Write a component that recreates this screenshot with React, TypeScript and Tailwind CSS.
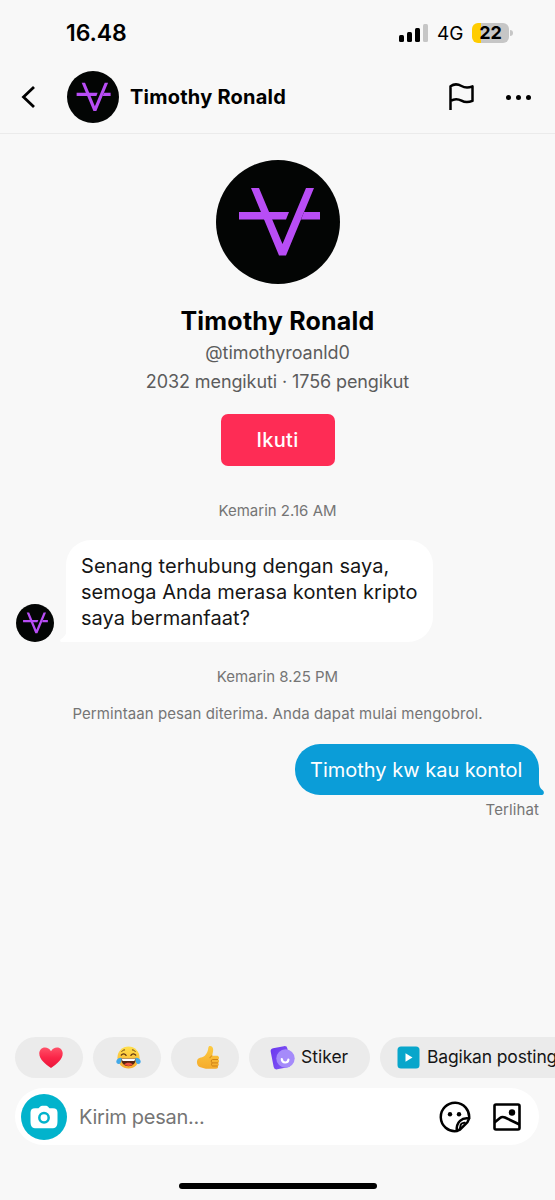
import React from 'react';
import clsx from 'clsx';

interface LogoProps {
  className?: string;
}

function Logo({ className }: LogoProps) {
  return (
    <svg viewBox="0 0 124 124" className={clsx('block shrink-0', className)}>
      <circle cx="62" cy="62" r="62" fill="#030504" />
      <g fill="#b84df5">
        <path d="M35 28h8l23.500 56L90 28h8L70 95.500h-7z" />
        <path d="M23 52h50l-3 7.500H23z" />
        <path d="M88 52h16v7.500H85z" />
      </g>
    </svg>
  );
}

function StatusBar() {
  return (
    <div className="h-[62px] shrink-0 flex justify-between pl-[66px] pr-[42px] pt-[18px]">
      <span className="text-[23px] leading-[31px] font-semibold tracking-[-0.1px]">16.48</span>
      <div className="flex items-center h-[30px]">
        <div className="flex items-end gap-[3px] h-[18px]">
          <i className="w-[5px] h-[7px] rounded-[1.5px] bg-black" />
          <i className="w-[5px] h-[10px] rounded-[1.5px] bg-black" />
          <i className="w-[5px] h-[14px] rounded-[1.5px] bg-black" />
          <i className="w-[5px] h-[18px] rounded-[1.5px] bg-[#c6c6c6]" />
        </div>
        <span className="ml-[9px] w-[26px] text-[19px] leading-[30px] pt-[1px] whitespace-nowrap">4G</span>
        <div className="ml-[9px] w-[37px] h-[20px] rounded-[6px] bg-[linear-gradient(to_right,#ffcc00_9px,#c6c6c6_9px)] text-[18px] leading-[20px] font-bold text-center">
          22
        </div>
        <i className="ml-[1px] w-[3px] h-[6px] rounded-r-full bg-[#c6c6c6]" />
      </div>
    </div>
  );
}

function Header() {
  return (
    <header className="h-[72px] shrink-0 flex items-center border-b border-[#ebebeb] pl-[20px] pr-[23px] pb-[1px]">
      <svg width="17" height="24" viewBox="0 0 17 24" fill="none" stroke="#000" strokeWidth="2.800" className="block">
        <path d="M14 2L3.500 12L14 22" />
      </svg>
      <Logo className="ml-[30px] size-[52px]" />
      <h1 className="ml-[11px] text-[20px] font-bold tracking-[0.23px] whitespace-nowrap">Timothy Ronald</h1>
      <svg
        width="28"
        height="28"
        viewBox="0 0 28 28"
        fill="none"
        stroke="#000"
        strokeWidth="2.500"
        strokeLinejoin="round"
        className="ml-auto block"
      >
        <path d="M3.500 27V3.200C7 .8 11 1 14.500 3c3.200 1.900 6.800 2 11 .4v14.500c-4.200 1.700-7.800 1.600-11-.2C11 15.700 7 15.700 3.500 18" />
      </svg>
      <div className="ml-[31px] mr-[1px] flex gap-[5px]">
        <i className="size-[5px] rounded-full bg-black" />
        <i className="size-[5px] rounded-full bg-black" />
        <i className="size-[5px] rounded-full bg-black" />
      </div>
    </header>
  );
}

function Profile() {
  return (
    <section className="flex flex-col items-center pt-[26px]">
      <Logo className="size-[124px]" />
      <h2 className="mt-[21px] text-[25px] leading-[32px] font-bold tracking-[0.23px]">Timothy Ronald</h2>
      <p className="mt-[2px] text-[18px] leading-[28px] tracking-[-0.07px] text-[#5c5c5c]">@timothyroanld0</p>
      <p className="mt-[1px] text-[18px] leading-[28px] tracking-[-0.1px] text-[#5c5c5c]">
        2032 mengikuti · 1756 pengikut
      </p>
      <button className="mt-[18px] w-[114px] h-[52px] rounded-[7px] bg-[#fe2c55] text-white text-[20px] font-medium tracking-[0.3px]">
        Ikuti
      </button>
    </section>
  );
}

function Messages() {
  return (
    <section className="flex flex-col">
      <p className="mt-[35px] text-center text-[15px] leading-[20px] text-[#757575]">Kemarin 2.16 AM</p>
      <div className="mt-[19px] pl-4 flex items-end">
        <Logo className="size-[38px]" />
        <div className="relative ml-[12px] w-[367px] h-[102px] rounded-[25px] rounded-bl-none bg-white pl-[15px] pt-[13px] text-[20px] leading-[26px] tracking-[0.05px] whitespace-nowrap text-[#161616]">
          <svg width="7" height="12" viewBox="0 0 7 12" className="absolute bottom-0 -left-[6px]">
            <path d="M7 0C6 5 4 7 1 9c-1.500 1-1 3 .5 3H7z" fill="#fff" />
          </svg>
          <p>Senang terhubung dengan saya,</p>
          <p>semoga Anda merasa konten kripto</p>
          <p>saya bermanfaat?</p>
        </div>
      </div>
      <p className="mt-[25px] text-center text-[15px] leading-[20px] text-[#757575]">Kemarin 8.25 PM</p>
      <p className="mt-[17px] text-center text-[15px] leading-[20px] tracking-[0.08px] text-[#757575]">
        Permintaan pesan diterima. Anda dapat mulai mengobrol.
      </p>
      <div className="mt-[20px] mr-[16px] self-end relative w-[244px] h-[51px] rounded-[25px] rounded-br-none bg-[#0b9dd8] pl-[15px] text-[20px] leading-[53px] whitespace-nowrap text-white">
        <svg width="7" height="14" viewBox="0 0 7 14" className="absolute bottom-0 -right-[5px]">
          <path d="M0 0h2c0 5 1 7 4 9.500 1.500 1.500 1 4.500-1 4.500H0z" fill="#0b9dd8" />
        </svg>
        Timothy kw kau kontol
      </div>
      <p className="mt-[5px] mr-[16px] text-right text-[15px] leading-[20px] tracking-[0.1px] text-[#757575]">Terlihat</p>
    </section>
  );
}

function Heart() {
  return (
    <svg width="26" height="24" viewBox="0 0 26 24">
      <defs>
        <linearGradient id="heart" x1="0" y1="0" x2="0" y2="1">
          <stop offset="0" stopColor="#ff5168" />
          <stop offset=".5" stopColor="#fb2548" />
          <stop offset="1" stopColor="#e9163a" />
        </linearGradient>
      </defs>
      <path
        d="M13 5.200C11.500 2.800 9.500 1.500 7 1.500 3.500 1.500 1.300 4.200 1.300 7.600c0 6 6.200 10.600 11.700 14.400 5.500-3.800 11.700-8.400 11.700-14.400 0-3.400-2.200-6.100-5.700-6.100-2.500 0-4.500 1.300-6 3.700z"
        fill="url(#heart)"
      />
    </svg>
  );
}

function Joy() {
  return (
    <svg width="25" height="25" viewBox="0 0 26 26">
      <defs>
        <linearGradient id="face" x1="0" y1="0" x2="0" y2="1">
          <stop offset="0" stopColor="#ffe04b" />
          <stop offset="1" stopColor="#f8ab2f" />
        </linearGradient>
      </defs>
      <circle cx="13" cy="13" r="11.500" fill="url(#face)" />
      <g fill="none" stroke="#5f3512" strokeWidth="1.300" strokeLinecap="round" strokeLinejoin="round">
        <path d="M6 6.700C7 5.500 8 5 9 5.100M17 5.100c1-.1 2 .4 3 1.600" strokeWidth="1" />
        <path d="M5.500 10.600c1.300-2 3.600-2 5 .2M20.500 10.600c-1.300-2-3.600-2-5 .2" />
      </g>
      <path d="M5.500 14h15c.3 4.800-3 8-7.500 8s-7.800-3.200-7.500-8z" fill="#572512" />
      <path d="M6.200 14.300h13.600c0 1.500-.6 2.400-1.600 2.400H7.800c-1 0-1.600-.9-1.600-2.400z" fill="#fff" />
      <path d="M8.500 20.300c2-2.300 7-2.300 9 0-2.500 2-6.500 2-9 0z" fill="#f0503c" />
      <path d="M5.800 13.200C3 13 .5 14.500.3 17c-.1 2 1.300 3 2.700 2.800 2.300-.3 2.900-3.600 2.800-6.600zM20.200 13.200c2.800-.2 5.300 1.300 5.500 3.800.1 2-1.300 3-2.700 2.800-2.300-.3-2.900-3.600-2.800-6.600z" fill="#42a9e9" />
    </svg>
  );
}

function ThumbsUp() {
  return (
    <svg width="24" height="26" viewBox="0 0 24 26">
      <defs>
        <linearGradient id="thumb" x1="0" y1="0" x2="0" y2="1">
          <stop offset="0" stopColor="#fdcb41" />
          <stop offset="1" stopColor="#f5ab2c" />
        </linearGradient>
      </defs>
      <path
        d="M1.500 14.500C3 12 7 13 9 10.500c2-2.500 3-4.500 3.300-7.500.1-1.600 1-2.200 2-2 2.400.4 3.200 2.500 2.800 5l-.9 4.800h4.600c2.400 0 2.900 2.800 1.400 3.700 1.300.8 1.200 2.700 0 3.400 1 .9.800 2.500-.4 3.100.7 1.300-.1 2.800-2 2.800H13c-3.500.2-6-.6-8.500-1.500C.8 21 .4 17 1.500 14.500z"
        fill="url(#thumb)"
      />
      <path
        d="M22 14.500h-5.500c-1.700 0-1.700 3.300 0 3.400H22M16.500 17.900c-1.500.2-1.300 2.900.2 3.100h5M16.200 10.800c-1.500.5-2.300 1.400-2.200 2.400"
        fill="none"
        stroke="#c97a13"
        strokeWidth=".9"
      />
    </svg>
  );
}

function StickerBadge() {
  return (
    <svg width="26" height="26" viewBox="0 0 26 26" className="block shrink-0">
      <defs>
        <linearGradient id="card" x1="0" y1="0" x2="1" y2="1">
          <stop offset="0" stopColor="#6b37ef" />
          <stop offset="1" stopColor="#855cf6" />
        </linearGradient>
      </defs>
      <rect x="3" y="2" width="17" height="21.500" rx="3" transform="rotate(-11 11.500 12.500)" fill="url(#card)" />
      <circle cx="16.500" cy="13.500" r="9.200" fill="#a58bfa" />
      <path
        d="M12.800 14c.3 4.600 6.100 4.500 6.600.6"
        fill="none"
        stroke="#fff"
        strokeWidth="2.200"
        strokeLinecap="round"
      />
    </svg>
  );
}

const chip = 'h-[41px] shrink-0 rounded-full bg-[#ebebeb] flex items-center';

function QuickReplies() {
  return (
    <div className="flex gap-[10px] pl-[15px] overflow-hidden text-[17.5px] text-[#161616] whitespace-nowrap">
      <div className={clsx(chip, 'w-[68px] justify-center pl-[3px]')}>
        <Heart />
      </div>
      <div className={clsx(chip, 'w-[68px] justify-center pl-[3px]')}>
        <Joy />
      </div>
      <div className={clsx(chip, 'w-[68px] justify-center pl-[5px]')}>
        <ThumbsUp />
      </div>
      <div className={clsx(chip, 'w-[121px] pl-[20px]')}>
        <StickerBadge />
        <span className="ml-[6px]">Stiker</span>
      </div>
      <div className={clsx(chip, 'w-[230px] pl-[17px]')}>
        <svg width="23" height="23" viewBox="0 0 23 23" className="block shrink-0">
          <rect x=".5" y=".5" width="22" height="22" rx="3.500" fill="#08a6cb" />
          <path d="M8.500 7.200v8.600l7-4.300z" fill="#fff" />
        </svg>
        <span className="ml-[7px] tracking-[-0.15px]">Bagikan posting</span>
      </div>
    </div>
  );
}

function Composer() {
  return (
    <div className="mt-[10px] ml-[15px] mr-[16px] h-[57px] shrink-0 rounded-full bg-white flex items-center pl-[6px] pr-[17px]">
      <div className="size-[46px] rounded-full bg-[#02b3cc] flex items-center justify-center">
        <svg width="28" height="24" viewBox="0 0 28 24">
          <path
            d="M8.500 3.200 10 1.700C10.700 1 11.300.7 12.300.7h3.400c1 0 1.600.3 2.300 1l1.500 1.500H23c3 0 4.500 1.500 4.500 4.400v8.200c0 6-1.500 7.500-6 7.500h-15c-4.500 0-6-1.500-6-7.500V7.600c0-2.900 1.500-4.400 4.500-4.400z"
            fill="#fff"
          />
          <circle cx="14" cy="12.800" r="4.700" fill="none" stroke="#02b3cc" strokeWidth="2.500" />
        </svg>
      </div>
      <span className="ml-[12px] text-[20px] tracking-[-0.27px] text-[#757575]">Kirim pesan...</span>
      <svg
        width="32"
        height="32"
        viewBox="0 0 32 32"
        fill="none"
        stroke="#000"
        strokeWidth="2.500"
        strokeLinejoin="round"
        className="ml-auto block"
      >
        <path d="M30.100 17.500A14.200 14.200 0 1 0 17.500 30.100" />
        <path d="M17.800 30.100l3.200-1.500 7.500-7.500 1.600-3.600c-7-1.200-13.200 3.500-12.300 12.600z" />
        <path d="M20 28.500c1.800-1.200 1-3.500 2-5.200 1-1.500 3-1.300 4.500-1.600" strokeWidth="2" />
        <circle cx="11" cy="13.200" r="2.200" fill="#000" stroke="none" />
        <circle cx="20" cy="13.200" r="2.200" fill="#000" stroke="none" />
      </svg>
      <svg
        width="28"
        height="28"
        viewBox="0 0 28 28"
        fill="none"
        stroke="#000"
        strokeWidth="2.600"
        className="ml-[22px] mr-[1px] block"
      >
        <rect x="1.500" y="1.500" width="25" height="25" rx="1.500" />
        <path d="M1.500 19.500l5.500-4.500c1.600-1.300 3-1.300 5-.5L26.500 21.500" />
        <circle cx="19" cy="9.500" r="3.200" fill="#000" stroke="none" />
      </svg>
    </div>
  );
}

export default function App() {
  return (
    <div className="w-[555px] h-[1200px] overflow-hidden flex flex-col bg-[#f8f8f8] text-black font-[Inter,sans-serif]">
      <StatusBar />
      <Header />
      <main className="flex-1">
        <Profile />
        <Messages />
      </main>
      <QuickReplies />
      <Composer />
      <div className="mt-[38px] mb-[11px] mx-auto w-[198px] h-[6px] shrink-0 rounded-full bg-black" />
    </div>
  );
}
